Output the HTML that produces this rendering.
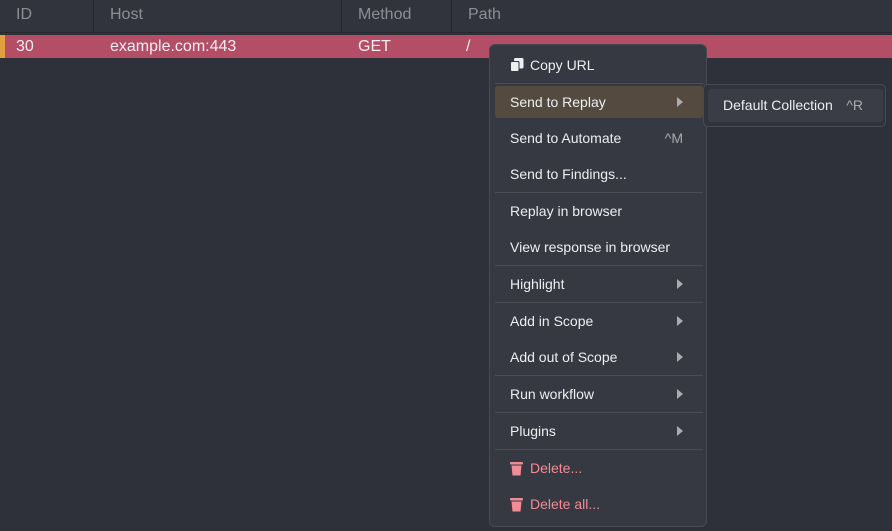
<!DOCTYPE html>
<html><head><style>
*{margin:0;padding:0;box-sizing:border-box}
body{width:892px;height:531px;background:#2e3139;font-family:"Liberation Sans",sans-serif;position:relative;overflow:hidden}
.hdr{position:absolute;left:0;top:0;width:892px;height:33px;background:#31343c;border-bottom:1px solid #26282e;color:#8c8f95;font-size:16px}
.hdr span,.row span{position:absolute;top:6px}
.vd{position:absolute;top:0;width:1px;height:33px;background:#25272d}
.row{position:absolute;left:0;top:35px;width:892px;height:23px;background:#b44d66;color:#f2eef0;font-size:16px}
.row span{top:3px}
.bar{position:absolute;left:0;top:0;width:5px;height:23px;background:#e0a040}
.menu{position:absolute;left:489px;top:44px;width:218px;height:483px;background:#363942;border:1px solid #474a52;border-radius:6px}
.it{position:absolute;left:5px;width:208px;height:32px;color:#eceef0;font-size:14px;line-height:32px;padding-left:15px;border-radius:3px}
.it .k{position:absolute;right:20px;top:0;color:#a9abb0}
.it .a{position:absolute;right:20px;top:11px;width:0;height:0;border-left:6px solid #a9abb0;border-top:5px solid transparent;border-bottom:5px solid transparent}
.sep{position:absolute;left:5px;width:208px;height:1px;background:#4a4d55}
.del{color:#f08c96}
.sub{position:absolute;left:703px;top:84px;width:183px;height:43px;background:#30333b;border:1px solid #474a52;border-radius:5px}
.sub div{position:absolute;left:4px;top:4px;width:175px;height:33px;background:#3a3d46;border-radius:3px;color:#eceef0;font-size:14px;line-height:33px;padding-left:15px}
</style></head><body>
<div class="hdr"><span style="left:16px">ID</span><div class="vd" style="left:93px"></div><span style="left:110px">Host</span><div class="vd" style="left:341px"></div><span style="left:358px">Method</span><div class="vd" style="left:451px"></div><span style="left:468px">Path</span></div>
<div class="row"><div class="bar"></div><span style="left:16px">30</span><span style="left:110px">example.com:443</span><span style="left:358px">GET</span><span style="left:466px">/</span></div>
<div class="menu">
<div class="it" style="top:4px;padding-left:35px"><svg style="position:absolute;left:15px;top:9px" width="14" height="14" viewBox="0 0 14 14"><rect x="4" y="0" width="9.5" height="10.5" rx="1.5" fill="#eceef0"/><rect x="0" y="3" width="9.5" height="11" rx="1.5" fill="#363942"/><rect x="1" y="4" width="7.5" height="9" rx="1" fill="#eceef0"/></svg>Copy URL</div>
<div class="sep" style="top:38px"></div>
<div class="it" style="top:41px;background:#554a40">Send to Replay<i class="a"></i></div>
<div class="it" style="top:77px">Send to Automate<span class="k">^M</span></div>
<div class="it" style="top:113px">Send to Findings...</div>
<div class="sep" style="top:147px"></div>
<div class="it" style="top:150px">Replay in browser</div>
<div class="it" style="top:186px">View response in browser</div>
<div class="sep" style="top:220px"></div>
<div class="it" style="top:223px">Highlight<i class="a"></i></div>
<div class="sep" style="top:257px"></div>
<div class="it" style="top:260px">Add in Scope<i class="a"></i></div>
<div class="it" style="top:296px">Add out of Scope<i class="a"></i></div>
<div class="sep" style="top:330px"></div>
<div class="it" style="top:333px">Run workflow<i class="a"></i></div>
<div class="sep" style="top:367px"></div>
<div class="it" style="top:370px">Plugins<i class="a"></i></div>
<div class="sep" style="top:404px"></div>
<div class="it del" style="top:407px;padding-left:35px"><svg style="position:absolute;left:15px;top:9px" width="13" height="15" viewBox="0 0 13 15"><rect x="0" y="1" width="13" height="2.5" rx="1" fill="#f08c96"/><path d="M1.5 4.5h10l-1 10h-8z" fill="#f08c96"/></svg>Delete...</div>
<div class="it del" style="top:443px;padding-left:35px"><svg style="position:absolute;left:15px;top:9px" width="13" height="15" viewBox="0 0 13 15"><rect x="0" y="1" width="13" height="2.5" rx="1" fill="#f08c96"/><path d="M1.5 4.5h10l-1 10h-8z" fill="#f08c96"/></svg>Delete all...</div>
</div>
<div class="sub"><div>Default Collection<span style="position:absolute;right:20px;color:#a9abb0">^R</span></div></div>
</body></html>
